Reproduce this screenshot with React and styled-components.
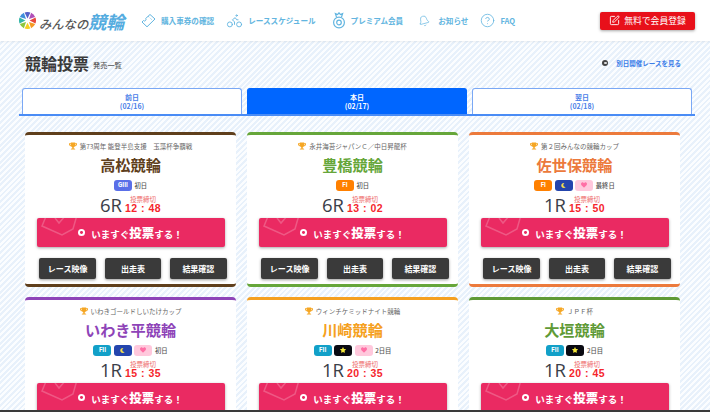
import React from "react";
import styled, { createGlobalStyle } from "styled-components";
import { Bike, Bell, CircleHelp, SquarePen } from "lucide-react";
import { FaTrophy, FaMoon, FaHeart, FaStar } from "react-icons/fa";

const Global = createGlobalStyle`
  html, body {
    margin: 0;
    height: 100%;
    overflow: hidden;
  }
  body {
    font-family: "Noto Sans CJK JP", "Noto Sans", sans-serif;
    color: #333;
  }
  * { box-sizing: border-box; }
`;

const Page = styled.div`
  height: 412px;
  overflow: hidden;
  background: repeating-linear-gradient(135deg, #fbfdff 0 2px, #e8f1fb 2px 4px);
`;

const Header = styled.header`
  height: 41px;
  background: #fff;
  display: flex;
  align-items: center;
  padding: 0 15px 0 19px;
  box-shadow: 0 1px 2px rgba(0, 0, 0, 0.06);
`;

const Logo = styled.div`
  display: flex;
  align-items: center;
  gap: 3px;
  width: 122px;
  flex: none;
  font-style: italic;
  font-weight: 700;
  white-space: nowrap;
`;

const LogoKana = styled.span`
  font-size: 12.3px;
  font-weight: 500;
  color: #555;
`;

const LogoKanji = styled.span`
  font-size: 18px;
  color: #55acdf;
`;

const Nav = styled.nav`
  display: flex;
  align-items: center;
  gap: 12px;
`;

const NavItem = styled.a`
  display: flex;
  align-items: center;
  gap: ${(p) => p.$gap || 5}px;
  margin-left: ${(p) => p.$push || 0}px;
  font-size: 7.6px;
  font-weight: 700;
  color: #62b5e0;
  white-space: nowrap;
  svg { flex: none; }
`;

const BellIcon = styled(Bell)`
  transform: rotate(-15deg);
`;

const Signup = styled.a`
  margin-left: auto;
  width: 95px;
  height: 18px;
  border-radius: 2px;
  background: #e8101a;
  color: #fff;
  font-size: 8.8px;
  display: flex;
  align-items: center;
  justify-content: center;
  gap: 4px;
  box-shadow: 0 1px 3px rgba(0, 0, 0, 0.35);
`;

const TitleRow = styled.div`
  display: flex;
  align-items: center;
  height: 47px;
  padding: 0 29px 3px 25px;
`;

const Title = styled.h1`
  margin: 0;
  font-size: 16px;
  font-weight: 700;
  color: #3a3a3a;
`;

const TitleSub = styled.span`
  margin-left: 4px;
  margin-top: 4px;
  font-size: 7.2px;
  font-weight: 500;
  color: #555;
`;

const OtherLink = styled.a`
  margin-left: auto;
  display: flex;
  align-items: center;
  gap: 8px;
  font-size: 6.5px;
  font-weight: 700;
  color: #3d7de8;
`;

const Dot = styled.span`
  width: ${(p) => p.$size}px;
  height: ${(p) => p.$size}px;
  flex: none;
  border-radius: 50%;
  background: ${(p) => p.$color};
  display: flex;
  align-items: center;
  justify-content: center;
  &::after {
    content: "";
    width: 40%;
    height: 40%;
    border-radius: 50%;
    background: ${(p) => p.$inner};
  }
`;

const Tabs = styled.div`
  margin: 0 15px 0 19px;
  padding: 0 3px;
  display: grid;
  grid-template-columns: repeat(3, 1fr);
  gap: 5px;
  border-bottom: 2px solid #4a8cf5;
`;

const Tab = styled.div`
  height: 26px;
  border: 1px solid ${(p) => (p.$active ? "#0066ff" : "#7aa8f5")};
  border-bottom: none;
  border-radius: 3px 3px 0 0;
  background: ${(p) => (p.$active ? "#0066ff" : "#fff")};
  color: ${(p) => (p.$active ? "#fff" : "#4a80e8")};
  display: flex;
  flex-direction: column;
  align-items: center;
  justify-content: center;
  font-size: 7px;
  font-weight: 700;
  line-height: 9px;
`;

const Grid = styled.div`
  margin-top: 16px;
  padding-left: 25px;
  display: grid;
  grid-template-columns: repeat(3, 211px);
  column-gap: 11px;
  row-gap: 10px;
`;

const Card = styled.article`
  height: 155px;
  background: #fff;
  border-top: 3px solid ${(p) => p.$color};
  border-bottom: 3px solid ${(p) => p.$color};
  border-radius: 4px;
  display: flex;
  flex-direction: column;
  align-items: center;
  padding: 0 11px;
`;

const Cup = styled.div`
  margin-top: 5px;
  height: 11px;
  display: flex;
  align-items: center;
  gap: 3px;
  font-size: 6.5px;
  color: #666;
  white-space: nowrap;
  svg { color: #f5a623; }
`;

const Venue = styled.h2`
  margin: 1px 0 0;
  height: 24px;
  line-height: 24px;
  font-size: 15.2px;
  font-weight: 700;
  color: ${(p) => p.$color};
`;

const Badges = styled.div`
  margin-top: 3px;
  height: 12px;
  display: flex;
  align-items: center;
  gap: 2.5px;
  font-size: 6.3px;
  font-weight: 500;
  color: #555;
`;

const Badge = styled.span`
  width: 18px;
  height: 11px;
  border-radius: 3px;
  background: ${(p) => p.$bg};
  color: #fff;
  display: flex;
  align-items: center;
  justify-content: center;
  font-family: "Roboto", sans-serif;
  font-size: 6.3px;
  font-weight: 700;
`;

const RaceRow = styled.div`
  height: 23px;
  margin-top: 1px;
  padding-top: 2px;
  display: flex;
  align-items: center;
  gap: 3px;
`;

const RaceNo = styled.span`
  font-family: "Open Sans", sans-serif;
  font-size: 18.5px;
  color: #3a4048;
`;

const Deadline = styled.div`
  display: flex;
  flex-direction: column;
  align-items: center;
`;

const DeadlineLabel = styled.span`
  font-size: 6.5px;
  line-height: 7.5px;
  color: #ee6a6a;
`;

const DeadlineTime = styled.span`
  font-family: "Liberation Sans", sans-serif;
  font-size: 10.5px;
  line-height: 9.5px;
  font-weight: 700;
  letter-spacing: 0.5px;
  color: #f5262c;
  white-space: pre;
`;

const VoteButton = styled.a`
  position: relative;
  overflow: hidden;
  width: 188px;
  height: 29px;
  margin-top: 3px;
  flex: none;
  background: #ea2a62;
  border-radius: 2px;
  color: #fff;
  display: flex;
  align-items: center;
  justify-content: center;
  gap: 6px;
  font-size: 9.5px;
  font-weight: 700;
  box-shadow: 0 1px 3px rgba(0, 0, 0, 0.35);
`;

const VoteStrong = styled.b`
  font-size: 12.5px;
`;

const VoteMark = styled.svg`
  position: absolute;
  left: 3px;
  top: -6px;
`;

const SubRow = styled.div`
  margin-top: 11px;
  margin-left: 5px;
  width: 188px;
  display: flex;
  justify-content: center;
  gap: 8.7px;
`;

const SubButton = styled.a`
  width: 56.7px;
  height: 21px;
  border-radius: 2px;
  background: #3a3a3a;
  color: #fff;
  font-size: 8px;
  font-weight: 700;
  display: flex;
  align-items: center;
  justify-content: center;
  box-shadow: 0 1px 3px rgba(0, 0, 0, 0.4);
`;

const BottomEdge = styled.div`
  position: fixed;
  left: 0;
  right: 0;
  bottom: 0;
  height: 2px;
  background: #3a3a3a;
`;

const F1 = { bg: "#ff8000", text: "FI" };
const F2 = { bg: "#12a0c8", text: "FII" };
const G3 = { bg: "#5a6fe8", text: "GIII" };
const MOON = { bg: "#2445ad", icon: <FaMoon size={5} color="#f5e050" /> };
const HEART = { bg: "#ffc8dc", icon: <FaHeart size={6} color="#ff6fa5" /> };
const STAR = { bg: "#0a0a12", icon: <FaStar size={6} color="#f5e83a" /> };

const races = [
  { cup: "第73周年 能登半島支援　玉藻杯争覇戦", name: "高松競輪", color: "#5f3f1c", badges: [G3], day: "初日", no: "6R", time: "12 : 48" },
  { cup: "永井海苔ジャパンＣ／中日昇龍杯", name: "豊橋競輪", color: "#66a63a", badges: [F1], day: "初日", no: "6R", time: "13 : 02" },
  { cup: "第２回みんなの競輪カップ", name: "佐世保競輪", color: "#ec7a3c", badges: [F1, MOON, HEART], day: "最終日", no: "1R", time: "15 : 50" },
  { cup: "いわきゴールドしいたけカップ", name: "いわき平競輪", color: "#8e44b8", badges: [F2, MOON, HEART], day: "初日", no: "1R", time: "15 : 35" },
  { cup: "ウィンチケミッドナイト競輪", name: "川崎競輪", color: "#f5a020", badges: [F2, STAR, HEART], day: "2日目", no: "1R", time: "20 : 35" },
  { cup: "ＪＰＦ杯", name: "大垣競輪", color: "#5f9a36", badges: [F2, STAR], day: "2日目", no: "1R", time: "20 : 45" },
];

const wedges = ["#e8483c", "#f59a23", "#f5d020", "#8cc63f", "#35b6a8", "#3f8fdc", "#5560c8", "#b04fb8"];

function LogoWheel() {
  return (
    <svg width="17" height="17" viewBox="-10 -10 20 20">
      {wedges.map((c, i) => (
        <path
          key={c}
          d="M0 -2.5 L-3.4 -9.4 A10 10 0 0 1 3.4 -9.4 Z"
          fill={c}
          transform={`rotate(${i * 45 + 90})`}
        />
      ))}
    </svg>
  );
}

function TicketIcon() {
  return (
    <svg width="15" height="15" viewBox="0 0 15 15" fill="none" stroke="currentColor" strokeWidth="1">
      <path d="M9 1.5 L14 6 L6 13.8 L1 9 L2.5 7.5 A1.4 1.4 0 0 0 4.6 5.6 Z" />
      <path d="M7.3 3.4 L8.2 4.2 M9.6 5.6 L10.5 6.4" />
    </svg>
  );
}

function MedalIcon() {
  return (
    <svg width="14" height="17" viewBox="0 0 14 17" fill="none" stroke="currentColor" strokeWidth="1.2">
      <path d="M4.5 5 L3.4 1.6 L5.6 2.6 L7 0.8 L8.4 2.6 L10.6 1.6 L9.5 5" />
      <circle cx="7" cy="10.5" r="5.4" />
      <circle cx="7" cy="10.5" r="2.3" />
    </svg>
  );
}

function RaceCard({ race }) {
  return (
    <Card $color={race.color}>
      <Cup>
        <FaTrophy size={8} />
        {race.cup}
      </Cup>
      <Venue $color={race.color}>{race.name}</Venue>
      <Badges>
        {race.badges.map((b, i) => (
          <Badge key={i} $bg={b.bg}>{b.icon || b.text}</Badge>
        ))}
        {race.day}
      </Badges>
      <RaceRow>
        <RaceNo>{race.no}</RaceNo>
        <Deadline>
          <DeadlineLabel>投票締切</DeadlineLabel>
          <DeadlineTime>{race.time}</DeadlineTime>
        </Deadline>
      </RaceRow>
      <VoteButton>
        <VoteMark width="38" height="24" viewBox="0 0 38 24" fill="none" stroke="rgba(255,255,255,0.22)" strokeWidth="1.5">
          <path d="M7 2 L2 14 L22 23 L33 17 L37 3" />
          <path d="M15 6 L19 11 L26 3" />
        </VoteMark>
        <Dot $size={7} $color="#fff" $inner="#ea2a62" />
        <span>いますぐ<VoteStrong>投票</VoteStrong>する！</span>
      </VoteButton>
      <SubRow>
        <SubButton>レース映像</SubButton>
        <SubButton>出走表</SubButton>
        <SubButton>結果確認</SubButton>
      </SubRow>
    </Card>
  );
}

export default function App() {
  return (
    <Page>
      <Global />
      <Header>
        <Logo>
          <LogoWheel />
          <span>
            <LogoKana>みんなの</LogoKana>
            <LogoKanji>競輪</LogoKanji>
          </span>
        </Logo>
        <Nav>
          <NavItem><TicketIcon />購入車券の確認</NavItem>
          <NavItem><Bike size={17} strokeWidth={1.3} />レーススケジュール</NavItem>
          <NavItem $push={4}><MedalIcon />プレミアム会員</NavItem>
          <NavItem $push={3} $gap={8}><BellIcon size={12} strokeWidth={1.3} />お知らせ</NavItem>
          <NavItem><CircleHelp size={15} strokeWidth={1.3} />FAQ</NavItem>
        </Nav>
        <Signup>
          <SquarePen size={11} strokeWidth={2} />
          無料で会員登録
        </Signup>
      </Header>
      <TitleRow>
        <Title>競輪投票</Title>
        <TitleSub>発売一覧</TitleSub>
        <OtherLink>
          <Dot $size={6} $color="#444" $inner="#ddd" />
          別日開催レースを見る
        </OtherLink>
      </TitleRow>
      <Tabs>
        <Tab>前日<span>(02/16)</span></Tab>
        <Tab $active>本日<span>(02/17)</span></Tab>
        <Tab>翌日<span>(02/18)</span></Tab>
      </Tabs>
      <Grid>
        {races.map((r) => (
          <RaceCard key={r.name} race={r} />
        ))}
      </Grid>
      <BottomEdge />
    </Page>
  );
}
